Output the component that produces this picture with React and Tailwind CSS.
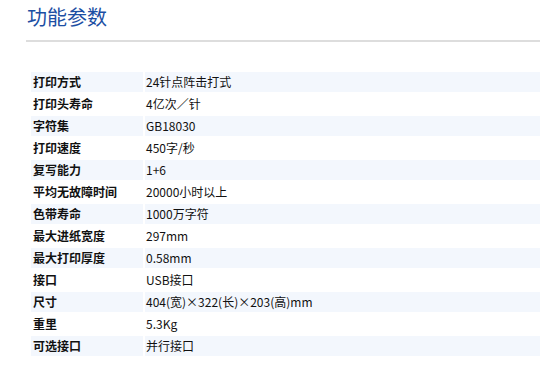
const specs = [
  ["打印方式", "24针点阵击打式"],
  ["打印头寿命", "4亿次／针"],
  ["字符集", "GB18030"],
  ["打印速度", "450字/秒"],
  ["复写能力", "1+6"],
  ["平均无故障时间", "20000小时以上"],
  ["色带寿命", "1000万字符"],
  ["最大进纸宽度", "297mm"],
  ["最大打印厚度", "0.58mm"],
  ["接口", "USB接口"],
  ["尺寸", "404(宽)×322(长)×203(高)mm"],
  ["重里", "5.3Kg"],
  ["可选接口", "并行接口"],
];

export default function App() {
  return (
    <div
      className="w-[540px] h-[373px] overflow-hidden bg-white pl-[26px]"
      style={{ fontFamily: '"Noto Sans CJK SC", "Noto Sans", sans-serif' }}
    >
      <div className="h-[42px] border-b-2 border-[#dddddd] pt-[3px] pl-[1px]">
        <h2 className="text-[20px] leading-[28px] text-[#1b4ea3] font-normal">功能参数</h2>
      </div>

      <table className="mt-[28px] ml-[3px] w-[516px] border-separate border-spacing-[2px] text-[12px]">
        <tbody>
          {specs.map(([label, value], i) => (
            <tr key={label} className={i % 2 === 0 ? "bg-[#f3f7fd]" : "bg-white"}>
              <td className="w-[112px] h-[20px] leading-[20px] p-0 pl-[2px] font-bold text-[#111]">{label}</td>
              <td className="h-[20px] leading-[20px] p-0 pl-[1px] text-[#111]">{value}</td>
            </tr>
          ))}
        </tbody>
      </table>
    </div>
  );
}
